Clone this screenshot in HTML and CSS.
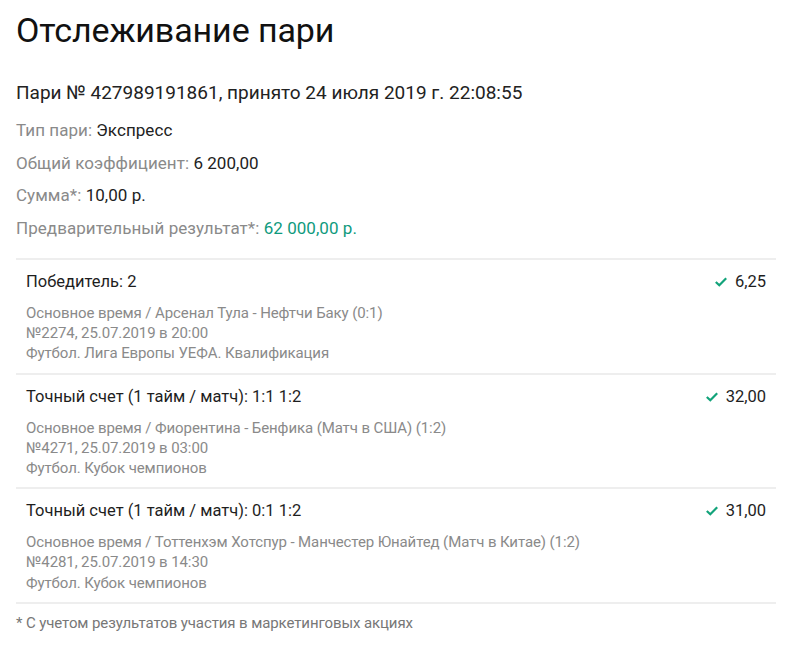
FILE: index.html
```html
<!DOCTYPE html>
<html lang="ru">
<head>
<meta charset="utf-8">
<link rel="stylesheet" href="styles.css">
</head>
<body>
<div class="page">
  <h1 class="title">Отслеживание пари</h1>
  <div class="bet-head">Пари № 427989191861, принято 24 июля 2019 г. 22:08:55</div>
  <div class="infos">
    <div class="info"><span class="label">Тип пари:</span> <span class="val">Экспресс</span></div>
    <div class="info"><span class="label">Общий коэффициент:</span> <span class="val">6 200,00</span></div>
    <div class="info"><span class="label">Сумма*:</span> <span class="val">10,00 р.</span></div>
    <div class="info"><span class="label">Предварительный результат*:</span> <span class="val green">62 000,00 р.</span></div>
  </div>

  <div class="list">
    <div class="row">
      <div class="row-top">
        <div class="outcome">Победитель: 2</div>
        <div class="coef"><svg class="check" viewBox="0 0 12 10" width="12" height="10"><path d="M0.8 5 L4.3 8.3 L11.2 1.3" fill="none" stroke="#12a37a" stroke-width="2.2"/></svg>6,25</div>
      </div>
      <div class="sub">Основное время / Арсенал Тула - Нефтчи Баку (0:1)</div>
      <div class="sub">№2274, 25.07.2019 в 20:00</div>
      <div class="sub">Футбол. Лига Европы УЕФА. Квалификация</div>
    </div>
    <div class="row">
      <div class="row-top">
        <div class="outcome">Точный счет (1 тайм / матч): 1:1 1:2</div>
        <div class="coef"><svg class="check" viewBox="0 0 12 10" width="12" height="10"><path d="M0.8 5 L4.3 8.3 L11.2 1.3" fill="none" stroke="#12a37a" stroke-width="2.2"/></svg>32,00</div>
      </div>
      <div class="sub">Основное время / Фиорентина - Бенфика (Матч в США) (1:2)</div>
      <div class="sub">№4271, 25.07.2019 в 03:00</div>
      <div class="sub">Футбол. Кубок чемпионов</div>
    </div>
    <div class="row">
      <div class="row-top">
        <div class="outcome">Точный счет (1 тайм / матч): 0:1 1:2</div>
        <div class="coef"><svg class="check" viewBox="0 0 12 10" width="12" height="10"><path d="M0.8 5 L4.3 8.3 L11.2 1.3" fill="none" stroke="#12a37a" stroke-width="2.2"/></svg>31,00</div>
      </div>
      <div class="sub">Основное время / Тоттенхэм Хотспур - Манчестер Юнайтед (Матч в Китае) (1:2)</div>
      <div class="sub">№4281, 25.07.2019 в 14:30</div>
      <div class="sub">Футбол. Кубок чемпионов</div>
    </div>
  </div>
  <div class="note">* С учетом результатов участия в маркетинговых акциях</div>
</div>
</body>
</html>
```
FILE: styles.css
```css
html, body {
  margin: 0;
  padding: 0;
  background: #fff;
}
body {
  font-family: Roboto, "Noto Sans", sans-serif;
  color: #1e1e1e;
}
.page {
  padding: 8px 24px 0 16px;
}
.title {
  margin: 0;
  font-weight: 400;
  font-size: 34px;
  line-height: 44px;
  color: #111;
  letter-spacing: -0.1px;
}
.bet-head {
  margin-top: 29px;
  font-size: 19px;
  line-height: 24px;
  color: #222;
}
.infos {
  margin-top: 9px;
}
.info {
  font-size: 17px;
  line-height: 32.5px;
  letter-spacing: 0.05px;
}
.label {
  color: #8a8a8a;
}
.val {
  color: #222;
}
.green {
  color: #0f9a7d;
}
.list {
  margin-top: 14px;
  border-top: 2px solid #eee;
}
.row {
  padding: 9px 10px 9px 10px;
  border-bottom: 2px solid #eee;
}
.row-top {
  display: flex;
  justify-content: space-between;
  align-items: center;
  font-size: 16.5px;
  line-height: 26px;
  color: #1e1e1e;
  margin-bottom: 8px;
}
.coef {
  display: flex;
  align-items: center;
  gap: 8px;
}
.sub {
  font-size: 15px;
  line-height: 20.2px;
  color: #8a8a8a;
  letter-spacing: -0.1px;
}
.note {
  font-size: 15px;
  line-height: 20px;
  color: #777;
  padding-top: 9px;
  letter-spacing: -0.1px;
}
```
